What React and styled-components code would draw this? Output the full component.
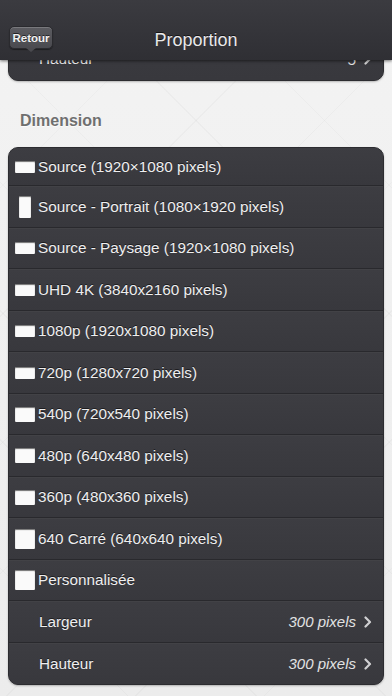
import React from "react";
import styled, { createGlobalStyle } from "styled-components";

const Global = createGlobalStyle`
  html, body { margin: 0; padding: 0; }
  body {
    width: 392px; height: 696px; overflow: hidden;
    font-family: "Liberation Sans", Arial, sans-serif;
    background: #efefef;
  }
`;

const Page = styled.div`
  position: relative;
  width: 392px;
  height: 696px;
  overflow: hidden;
  background-color: #f1f1f1;
  background-image:
    repeating-linear-gradient(45deg, transparent 0 90px, rgba(0,0,0,0.025) 90px 91px),
    repeating-linear-gradient(-45deg, transparent 0 90px, rgba(0,0,0,0.025) 90px 91px),
    linear-gradient(#f3f3f3, #ececec);
`;

const Header = styled.header`
  position: absolute;
  top: 0; left: 0; right: 0;
  height: 60px;
  z-index: 5;
  background: linear-gradient(#3b3b40, #2f2f34);
  box-shadow: 0 1px 3px rgba(0,0,0,0.55);
  display: flex;
  align-items: flex-end;
  justify-content: center;
  padding-bottom: 9px;
  box-sizing: border-box;
`;

const Title = styled.h1`
  margin: 0;
  font-size: 18px;
  font-weight: normal;
  color: #e9e9ea;
  text-shadow: 0 -1px 0 rgba(0,0,0,0.6);
  line-height: 22px;
`;

const BackButton = styled.button`
  position: absolute;
  left: 9px;
  top: 26px;
  width: 44px;
  height: 23px;
  padding: 0;
  border: 1px solid #2a2a2e;
  border-radius: 5px;
  background: linear-gradient(#5c5c61, #4a4a4f);
  box-shadow: inset 0 1px 0 rgba(255,255,255,0.18), 0 1px 1px rgba(0,0,0,0.4);
  color: #f2f2f2;
  font-family: "Liberation Sans", Arial, sans-serif;
  font-size: 11.5px;
  font-weight: bold;
  text-shadow: 0 -1px 0 rgba(0,0,0,0.6);
  &::after {
    content: "";
    position: absolute;
    left: 50%;
    bottom: -4px;
    margin-left: -5px;
    border-left: 5px solid transparent;
    border-right: 5px solid transparent;
    border-top: 4px solid #4a4a4f;
  }
`;

const Content = styled.main`
  padding: 0 8px;
  display: flex;
  flex-direction: column;
`;

const Card = styled.section`
  background: #3a3a3f;
  border: 1px solid #2c2c30;
  border-radius: 10px;
  overflow: hidden;
  box-shadow: 0 1px 2px rgba(0,0,0,0.25);
  margin-top: ${(p) => p.$mt || 0}px;
`;

const SectionLabel = styled.h2`
  margin: 30px 0 0 12px;
  height: 19px;
  font-size: 16px;
  font-weight: bold;
  color: #6f6f6f;
  text-shadow: 0 1px 0 rgba(255,255,255,0.8);
  line-height: 19px;
`;

const Row = styled.div`
  height: ${(p) => p.$h || 41.5}px;
  box-sizing: border-box;
  display: flex;
  align-items: ${(p) => (p.$bottom ? "flex-end" : "center")};
  padding: 0 11px ${(p) => (p.$bottom ? 12 : 0)}px ${(p) => (p.$indent ? 30 : 5)}px;
  background: linear-gradient(#3d3d42, #38383d);
  border-top: 1px solid rgba(255,255,255,0.05);
  border-bottom: 1px solid #29292d;
  &:first-child { border-top: none; }
  &:last-child { border-bottom: none; }
`;

const IconBox = styled.span`
  width: 22px;
  display: flex;
  justify-content: center;
  flex-shrink: 0;
  margin-right: 2px;
`;

const Shape = styled.span`
  display: block;
  width: ${(p) => p.$w}px;
  height: ${(p) => p.$h}px;
  background: #fafafa;
  box-shadow: inset 0 1px 1px rgba(0,0,0,0.55);
  border-radius: 1px;
`;

const Label = styled.span`
  flex: 1;
  font-size: 15.3px;
  color: #eeeeef;
  white-space: nowrap;
  text-shadow: 0 -1px 0 rgba(0,0,0,0.5);
`;

const Value = styled.span`
  font-size: 15px;
  font-style: italic;
  color: #e2e2e3;
  margin-right: 8px;
`;

const ChevronWrap = styled.span`
  display: flex;
  padding-bottom: ${(p) => p.$pb || 0}px;
`;

const Chevron = ({ pb }) => (
  <ChevronWrap $pb={pb}>
    <svg width="8" height="12" viewBox="0 0 8 12">
      <path d="M1.5 1.5 L6 6 L1.5 10.5" fill="none" stroke="#d0d0d2" strokeWidth="2.2" strokeLinecap="round" strokeLinejoin="round" />
    </svg>
  </ChevronWrap>
);

const items = [
  { t: "Source (1920×1080 pixels)", w: 20, h: 12 },
  { t: "Source - Portrait (1080×1920 pixels)", w: 12, h: 22 },
  { t: "Source - Paysage (1920×1080 pixels)", w: 20, h: 12 },
  { t: "UHD 4K (3840x2160 pixels)", w: 20, h: 12 },
  { t: "1080p (1920x1080 pixels)", w: 20, h: 12 },
  { t: "720p (1280x720 pixels)", w: 20, h: 12 },
  { t: "540p (720x540 pixels)", w: 20, h: 15 },
  { t: "480p (640x480 pixels)", w: 20, h: 15 },
  { t: "360p (480x360 pixels)", w: 20, h: 15 },
  { t: "640 Carré (640x640 pixels)", w: 20, h: 20 },
  { t: "Personnalisée", w: 20, h: 20 },
];

export default function App() {
  return (
    <Page>
      <Global />
      <Header>
        <BackButton>Retour</BackButton>
        <Title>Proportion</Title>
      </Header>
      <Content>
        <Card $mt={-1}>
          <Row $indent $bottom $h={80}>
            <Label>Hauteur</Label>
            <Value>5</Value>
            <Chevron pb={3} />
          </Row>
        </Card>
        <SectionLabel>Dimension</SectionLabel>
        <Card $mt={17}>
          {items.map((it, i) => (
            <Row key={i} $h={i === 0 ? 38 : 41.5}>
              <IconBox>
                <Shape $w={it.w} $h={it.h} />
              </IconBox>
              <Label>{it.t}</Label>
            </Row>
          ))}
          <Row $indent>
            <Label>Largeur</Label>
            <Value>300 pixels</Value>
            <Chevron />
          </Row>
          <Row $indent>
            <Label>Hauteur</Label>
            <Value>300 pixels</Value>
            <Chevron />
          </Row>
        </Card>
      </Content>
    </Page>
  );
}
